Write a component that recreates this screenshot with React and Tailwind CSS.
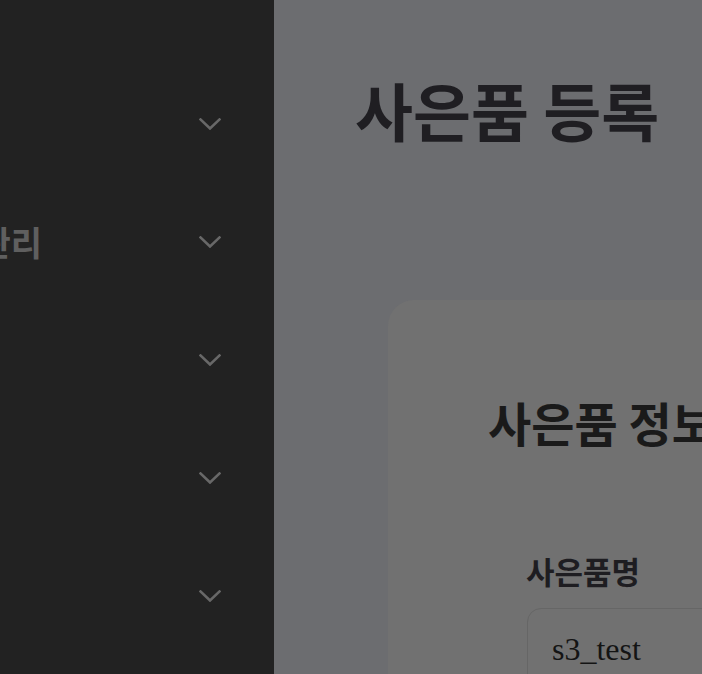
import { useState } from 'react';

const MENU = ['상품', '사은품 관리', '주문', '회원', '설정'];

function Chevron() {
  return (
    <svg width="22" height="12" viewBox="0 0 22 12" fill="none" className="shrink-0">
      <path d="M1.5 1.5 L11 10.5 L20.5 1.5" stroke="#686868" strokeWidth="2.6" strokeLinecap="square" />
    </svg>
  );
}

export default function App() {
  const [name, setName] = useState('s3_test');

  return (
    <div
      className="flex h-[674px] w-[702px] overflow-hidden"
      style={{ fontFamily: '"Noto Sans CJK KR", "Noto Sans", sans-serif' }}
    >
      {/* sidebar */}
      <aside className="w-[274px] shrink-0 overflow-hidden bg-[#222222] pt-[65px]">
        {MENU.map((label) => (
          <div key={label} className="flex h-[118px] items-center justify-between pr-[53px]">
            <span className="-ml-[122px] whitespace-nowrap text-[34px] font-bold leading-none text-[#5f5f5f]">
              {label}
            </span>
            <Chevron />
          </div>
        ))}
      </aside>

      {/* main */}
      <main className="flex-1 overflow-hidden bg-[#6c6d70] pl-[81px] pt-[77px]">
        <h1 className="whitespace-nowrap text-[63px] font-bold leading-none text-[#1f1e22]">사은품 등록</h1>

        <section className="ml-[33px] mt-[160px] w-[420px] rounded-tl-[26px] bg-[#717171] pl-[100px] pt-[98px] pb-10">
          <h2 className="whitespace-nowrap text-[47px] font-bold leading-none text-[#1a1a1a]">사은품 정보</h2>

          <label className="ml-[38px] mt-[110px] block whitespace-nowrap text-[31px] font-bold leading-none text-[#1e1d21]">
            사은품명
          </label>
          <input
            value={name}
            onChange={(e) => setName(e.target.value)}
            className="ml-[39px] mt-[22px] block h-[82px] w-[300px] rounded-tl-[14px] border border-[#666666] bg-[#717171] pl-[24px] text-[32px] text-[#141414] outline-none"
            style={{ fontFamily: '"Liberation Serif", serif' }}
          />
        </section>
      </main>
    </div>
  );
}
